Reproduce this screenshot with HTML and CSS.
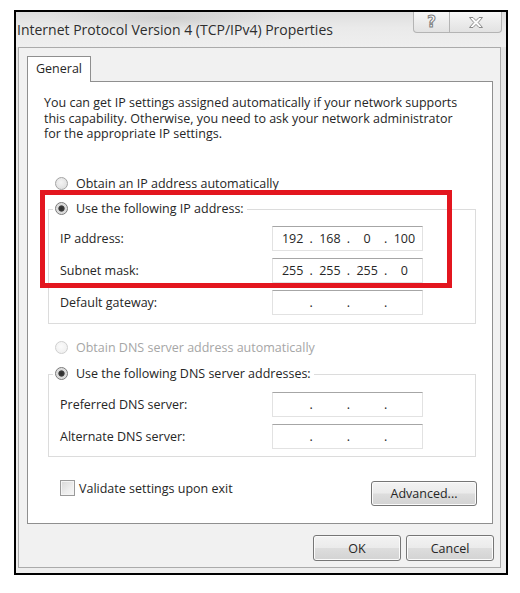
FILE: index.html
```html
<!DOCTYPE html>
<html>
<head>
<meta charset="utf-8">
<title>Internet Protocol Version 4 (TCP/IPv4) Properties</title>
<link rel="stylesheet" href="styles.css">
</head>
<body>
<div class="window">
  <div class="titlebar">
    <span class="title">Internet Protocol Version 4 (TCP/IPv4) Properties</span>
    <div class="caption-btns">
      <div class="cap help"><span class="q">?</span></div>
      <div class="cap close">
        <svg width="14" height="11" viewBox="0 0 14 11"><path d="M0.5 0.5 H4 L7 3.6 L10 0.5 H13.5 L9.2 5.5 L13.5 10.5 H10 L7 7.4 L4 10.5 H0.5 L4.8 5.5 Z" fill="#fdfdfd" stroke="#8a8a8a" stroke-width="1"/></svg>
      </div>
    </div>
  </div>
  <div class="client">
    <div class="tabs"><div class="tab">General</div></div>
    <div class="tabpanel">
      <div class="desc">
        <div class="dline">You can get IP settings assigned automatically if your network supports</div>
        <div class="dline">this capability. Otherwise, you need to ask your network administrator</div>
        <div class="dline">for the appropriate IP settings.</div>
      </div>

      <div class="radio-row first"><span class="radio"></span><span>Obtain an IP address automatically</span></div>

      <fieldset class="group ipgroup">
        <legend><span class="radio on"></span><span>Use the following IP address:</span></legend>
        <div class="row"><span class="lbl">IP address:</span>
          <div class="ipbox"><span class="oct">192</span><span class="dot">.</span><span class="oct">168</span><span class="dot">.</span><span class="oct">0</span><span class="dot">.</span><span class="oct">100</span></div>
        </div>
        <div class="row"><span class="lbl">Subnet mask:</span>
          <div class="ipbox"><span class="oct">255</span><span class="dot">.</span><span class="oct">255</span><span class="dot">.</span><span class="oct">255</span><span class="dot">.</span><span class="oct">0</span></div>
        </div>
        <div class="row"><span class="lbl">Default gateway:</span>
          <div class="ipbox"><span class="oct"></span><span class="dot">.</span><span class="oct"></span><span class="dot">.</span><span class="oct"></span><span class="dot">.</span><span class="oct"></span></div>
        </div>
      </fieldset>

      <div class="radio-row dns-auto disabled"><span class="radio off"></span><span>Obtain DNS server address automatically</span></div>

      <fieldset class="group dnsgroup">
        <legend><span class="radio on"></span><span>Use the following DNS server addresses:</span></legend>
        <div class="row"><span class="lbl">Preferred DNS server:</span>
          <div class="ipbox"><span class="oct"></span><span class="dot">.</span><span class="oct"></span><span class="dot">.</span><span class="oct"></span><span class="dot">.</span><span class="oct"></span></div>
        </div>
        <div class="row"><span class="lbl">Alternate DNS server:</span>
          <div class="ipbox"><span class="oct"></span><span class="dot">.</span><span class="oct"></span><span class="dot">.</span><span class="oct"></span><span class="dot">.</span><span class="oct"></span></div>
        </div>
      </fieldset>

      <div class="bottom-row">
        <label class="check"><span class="box"></span><span>Validate settings upon exit</span></label>
        <button class="btn advanced">Advanced...</button>
      </div>
    </div>
    <div class="buttons">
      <button class="btn ok">OK</button>
      <button class="btn cancel">Cancel</button>
    </div>
  </div>
  <div class="redbox"></div>
</div>
</body>
</html>
```

FILE: styles.css
```css
html, body {
  margin: 0;
  padding: 0;
  background: #ffffff;
}

body {
  font-family: "Open Sans", "Liberation Sans", sans-serif;
  font-size: 12.5px;
  color: #262626;
}

.window {
  position: relative;
  box-sizing: border-box;
  width: 494px;
  height: 565px;
  margin: 10px 0 0 14px;
  border: 2px solid #000;
  background: linear-gradient(180deg, #e2e2e2 0%, #ececec 30%, #eeeeee 100%);
  display: flex;
  flex-direction: column;
}

.titlebar {
  height: 35px;
  flex: none;
  display: flex;
  align-items: flex-start;
  background:
    radial-gradient(ellipse 120px 14px at 150px 6px, rgba(170,170,170,0.35), rgba(170,170,170,0) 100%),
    linear-gradient(180deg, #dedede 0%, #eaeaea 45%, #efefef 100%);
}

.title {
  font-size: 14px;
  line-height: 35px;
  padding-left: 1px;
  color: #2e2e2e;
  white-space: nowrap;
}

.caption-btns {
  margin-left: auto;
  margin-right: 4px;
  display: flex;
  height: 21px;
}

.cap {
  box-sizing: border-box;
  height: 21px;
  border: 1px solid #b4b4b4;
  border-top: none;
  background: linear-gradient(180deg, #f7f7f7 0%, #ececec 50%, #e2e2e2 100%);
  display: flex;
  align-items: center;
  justify-content: center;
}

.help {
  width: 37px;
  border-radius: 0 0 0 4px;
}

.close {
  width: 52px;
  border-left: none;
  border-radius: 0 0 4px 0;
}

.q {
  font-family: "DejaVu Sans", sans-serif;
  font-weight: bold;
  font-size: 15px;
  line-height: 15px;
  color: #fafafa;
  -webkit-text-stroke: 1px #7d7d7d;
}

.close svg {
  display: block;
}

.client {
  box-sizing: border-box;
  flex: 1;
  margin: 0 5px 5px 2px;
  border: 1px solid #ababab;
  background: #f1f1f1;
  display: flex;
  flex-direction: column;
}

.tabs {
  padding: 8px 0 0 8px;
  display: flex;
}

.tab {
  position: relative;
  z-index: 1;
  box-sizing: border-box;
  width: 64px;
  height: 26px;
  margin-bottom: -1px;
  padding-left: 8px;
  border: 1px solid #8f8f8f;
  border-bottom: none;
  background: #ffffff;
  line-height: 24px;
}

.tabpanel {
  box-sizing: border-box;
  height: 443px;
  margin: 0 7px 0 8px;
  padding: 13px 16px 0 16px;
  border: 1px solid #8f8f8f;
  background: #ffffff;
}

.desc {
  white-space: nowrap;
}

.dline {
  height: 15.5px;
  line-height: 15.5px;
}

.radio-row {
  display: flex;
  align-items: center;
  height: 18px;
  padding-left: 11px;
}

.radio-row.first {
  margin-top: 32.5px;
}

.radio-row.dns-auto {
  margin-top: 14px;
}

.disabled {
  color: #a6a6a6;
}

.radio {
  display: inline-block;
  box-sizing: border-box;
  width: 13px;
  height: 13px;
  border-radius: 50%;
  border: 1px solid #a3a3a3;
  background: radial-gradient(circle at 45% 40%, #f4f4f4 0%, #d9d9d9 100%);
  margin-right: 8px;
  flex: none;
  vertical-align: -2px;
  position: relative;
}

.radio.on {
  border-color: #7a7a7a;
  background: radial-gradient(circle at 50% 50%, #2c2c2c 0%, #3c3c3c 35%, #d6d6d6 45%, #eeeeee 100%);
}

.radio.off {
  border-color: #cfcfcf;
  background: radial-gradient(circle at 45% 40%, #fbfbfb 0%, #ececec 100%);
}

.group {
  min-width: 0;
  margin: 0 0 0 4px;
  padding: 4px 10px 5px 11px;
  border: 1px solid #dcdcdc;
}

.ipgroup {
  margin-top: 8px;
}

.dnsgroup {
  margin-top: 9px;
  padding-top: 5px;
  padding-bottom: 4px;
}

legend {
  padding: 0 3px 0 2px;
  margin-left: -7px;
  height: 18px;
  line-height: 18px;
  white-space: nowrap;
}

.row {
  display: flex;
  align-items: center;
  height: 32px;
}

.lbl {
  width: 212px;
  flex: none;
}

.ipbox {
  box-sizing: border-box;
  width: 151px;
  height: 25px;
  padding: 0 1px 0 3px;
  border: 1px solid #e2e2e2;
  border-top-color: #a6a6a6;
  background: #fff;
  display: flex;
  align-items: center;
}

.oct {
  flex: 1;
  text-align: center;
}

.dot {
  width: 4px;
  text-align: center;
}

.bottom-row {
  margin-top: 22px;
  display: flex;
  align-items: flex-start;
  justify-content: space-between;
}

.check {
  display: flex;
  align-items: center;
  height: 18px;
  margin-left: 16px;
}

.box {
  box-sizing: border-box;
  width: 15px;
  height: 16px;
  margin-right: 4px;
  border: 1px solid #9a9a9a;
  background: linear-gradient(135deg, #d7d7d7 0%, #eeeeee 60%, #f6f6f6 100%);
  box-shadow: inset 0 0 0 1px #f4f4f4;
}

.btn {
  box-sizing: border-box;
  height: 26px;
  padding: 0;
  border: 1px solid #767676;
  border-radius: 3px;
  background: linear-gradient(180deg, #f3f3f3 0%, #ebebeb 48%, #dddddd 52%, #d3d3d3 100%);
  box-shadow: inset 0 0 0 1px #fbfbfb;
  font-family: "Open Sans", "Liberation Sans", sans-serif;
  font-size: 12.5px;
  color: #262626;
}

.advanced {
  width: 106px;
  height: 25px;
  margin-top: 2px;
  margin-right: -1px;
}

.buttons {
  display: flex;
  justify-content: flex-end;
  gap: 5px;
  margin-top: 11px;
  padding-right: 6px;
}

.ok, .cancel {
  width: 88px;
}

.redbox {
  position: absolute;
  left: 24px;
  top: 178px;
  width: 412px;
  height: 98px;
  box-sizing: border-box;
  border: 5px solid #e3161f;
  pointer-events: none;
}
```
